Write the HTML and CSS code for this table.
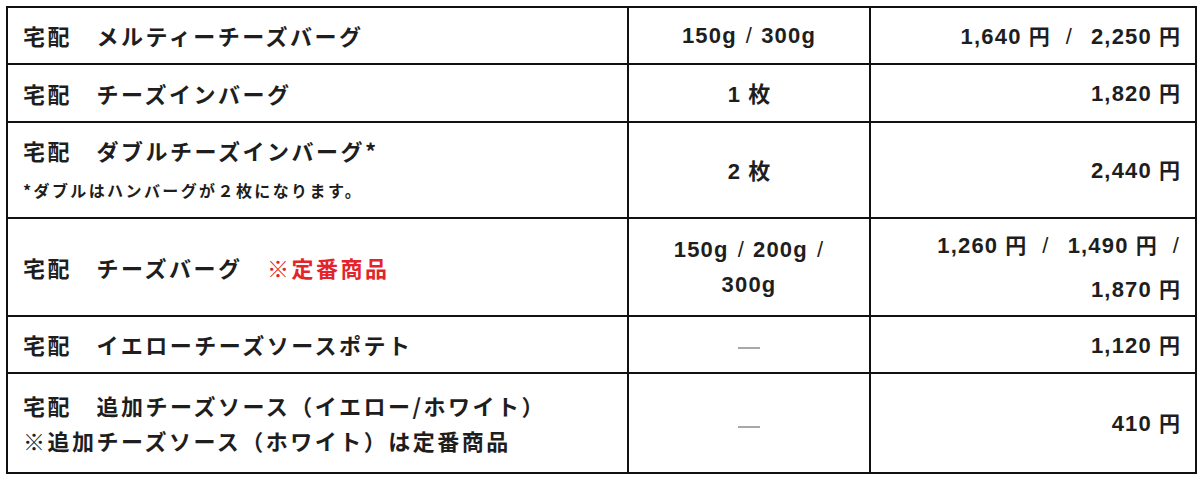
FILE: index.html
```html
<!DOCTYPE html>
<html lang="ja">
<head>
<meta charset="utf-8">
<link rel="stylesheet" href="styles.css">
</head>
<body>
<table class="menu">
  <colgroup>
    <col class="c-name">
    <col class="c-size">
    <col class="c-price">
  </colgroup>
  <tbody>
    <tr class="r1">
      <td class="name">宅配　メルティーチーズバーグ</td>
      <td class="size num">150g<span class="wsep">/</span>300g</td>
      <td class="price num">1,640<span class="yen">円</span><span class="sep">/</span>2,250<span class="yen">円</span></td>
    </tr>
    <tr class="r2">
      <td class="name">宅配　チーズインバーグ</td>
      <td class="size num">1<span class="mai">枚</span></td>
      <td class="price num">1,820<span class="yen">円</span></td>
    </tr>
    <tr class="r3">
      <td class="name">
        <div class="line">宅配　ダブルチーズインバーグ*</div>
        <div class="note">*ダブルはハンバーグが２枚になります。</div>
      </td>
      <td class="size num">2<span class="mai">枚</span></td>
      <td class="price num">2,440<span class="yen">円</span></td>
    </tr>
    <tr class="r4">
      <td class="name">宅配　チーズバーグ　<span class="red">※定番商品</span></td>
      <td class="size num">150g<span class="wsep">/</span>200g<span class="wsep end">/</span><br>300g</td>
      <td class="price num two-p">1,260<span class="yen">円</span><span class="sep">/</span>1,490<span class="yen">円</span><span class="sep end">/</span><br>1,870<span class="yen">円</span></td>
    </tr>
    <tr class="r5">
      <td class="name">宅配　イエローチーズソースポテト</td>
      <td class="size"><span class="dash"></span></td>
      <td class="price num">1,120<span class="yen">円</span></td>
    </tr>
    <tr class="r6">
      <td class="name">宅配　追加チーズソース（イエロー/ホワイト）<br>※追加チーズソース（ホワイト）は定番商品</td>
      <td class="size"><span class="dash"></span></td>
      <td class="price num">410<span class="yen">円</span></td>
    </tr>
  </tbody>
</table>
</body>
</html>
```
FILE: styles.css
```css
html, body {
  margin: 0;
  padding: 0;
  background: #fff;
}

body {
  font-family: "Noto Sans CJK JP", "Noto Sans", sans-serif;
  font-weight: 700;
  color: #1e1e1e;
}

.menu {
  margin: 6px 0 0 6px;
  width: 1189px;
  border-collapse: collapse;
  table-layout: fixed;
}

.c-name { width: 621px; }
.c-size { width: 242px; }
.c-price { width: 326px; }

.menu td {
  border: 2px solid #111;
  padding: 0 15px;
  font-size: 22px;
  letter-spacing: 2.5px;
  line-height: 35px;
  vertical-align: middle;
}

.r1 { height: 57px; }
.r2 { height: 58px; }
.r3 { height: 96px; }
.r4 { height: 98px; }
.r5 { height: 57px; }
.r6 { height: 100px; }

.name { text-align: left; }
.size { text-align: center; }
.price { text-align: right; }

.menu td.num {
  font-family: "Liberation Sans", "Noto Sans CJK JP", sans-serif;
  font-size: 22px;
  letter-spacing: 1.2px;
}

.menu td.price.num { padding-right: 15px; }

.menu td.two-p { line-height: 43px; }

.yen {
  font-family: "Noto Sans CJK JP", sans-serif;
  font-size: 21px;
  letter-spacing: 0;
  margin-left: 7px;
}

.mai {
  font-family: "Noto Sans CJK JP", sans-serif;
  font-size: 22px;
  letter-spacing: 0;
  margin-left: 7px;
}

.sep {
  font-weight: 400;
  margin: 0 18px 0 16px;
}

.wsep {
  font-weight: 400;
  margin: 0 8px 0 9px;
}

.sep.end,
.wsep.end { margin-right: 0; }

.line { line-height: 30px; }

.note {
  font-size: 16px;
  letter-spacing: 2.4px;
  line-height: 30px;
  margin-top: 10px;
}

.red { color: #e3242b; }

.dash {
  display: inline-block;
  width: 22px;
  height: 2px;
  background: #a8a8a8;
  vertical-align: middle;
}
```
